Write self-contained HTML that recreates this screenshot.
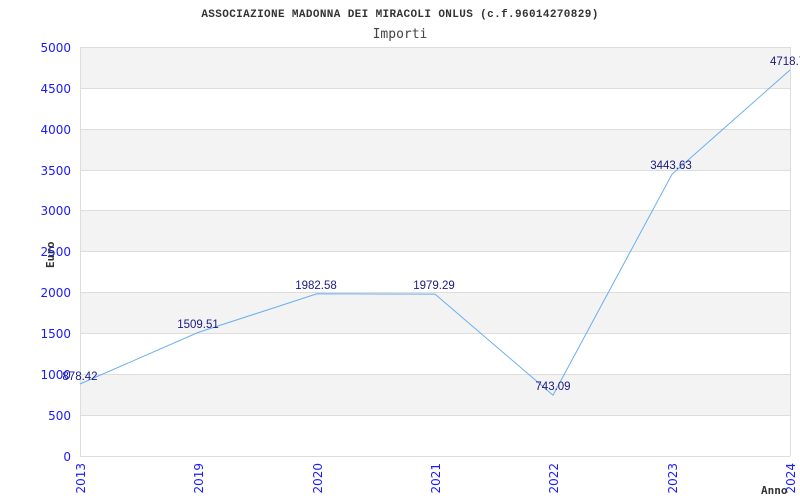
<!DOCTYPE html>
<html><head><meta charset="utf-8"><style>
html,body{margin:0;padding:0;background:#fff;}
svg{display:block}
</style></head><body>
<svg width="800" height="500" xmlns="http://www.w3.org/2000/svg">
<rect width="800" height="500" fill="#fff"/>
<text x="400" y="17" text-anchor="middle" font-family="Liberation Mono, DejaVu Sans Mono, monospace" font-weight="bold" font-size="11" letter-spacing="0.37" fill="#333">ASSOCIAZIONE MADONNA DEI MIRACOLI ONLUS (c.f.96014270829)</text>
<text x="400" y="38" text-anchor="middle" font-family="DejaVu Sans Mono, monospace" font-size="13" fill="#444">Importi</text>
<g fill="#f3f3f3">
<rect x="80" y="47" width="710" height="41"/>
<rect x="80" y="129" width="710" height="41"/>
<rect x="80" y="211" width="710" height="40"/>
<rect x="80" y="292" width="710" height="41"/>
<rect x="80" y="374" width="710" height="41"/>
</g>
<g stroke="#ddd" stroke-width="1">
<line x1="80" y1="47.5" x2="790" y2="47.5"/>
<line x1="80" y1="88.5" x2="790" y2="88.5"/>
<line x1="80" y1="129.5" x2="790" y2="129.5"/>
<line x1="80" y1="170.5" x2="790" y2="170.5"/>
<line x1="80" y1="210.5" x2="790" y2="210.5"/>
<line x1="80" y1="251.5" x2="790" y2="251.5"/>
<line x1="80" y1="292.5" x2="790" y2="292.5"/>
<line x1="80" y1="333.5" x2="790" y2="333.5"/>
<line x1="80" y1="374.5" x2="790" y2="374.5"/>
<line x1="80" y1="415.5" x2="790" y2="415.5"/>
<line x1="80" y1="456.5" x2="790" y2="456.5"/>
<line x1="80.5" y1="47" x2="80.5" y2="456"/>
<line x1="790.5" y1="47" x2="790.5" y2="456"/>
</g>
<g font-family="DejaVu Sans, sans-serif" font-size="12" fill="#1a1aff" text-anchor="end">
<text x="71" y="52">5000</text>
<text x="71" y="93">4500</text>
<text x="71" y="134">4000</text>
<text x="71" y="175">3500</text>
<text x="71" y="215">3000</text>
<text x="71" y="256">2500</text>
<text x="71" y="297">2000</text>
<text x="71" y="338">1500</text>
<text x="71" y="379">1000</text>
<text x="71" y="420">500</text>
<text x="71" y="461">0</text>
</g>
<g font-family="DejaVu Sans, sans-serif" font-size="12" fill="#1a1aff" text-anchor="end">
<text transform="translate(85,463) rotate(-90)">2013</text>
<text transform="translate(203,463) rotate(-90)">2019</text>
<text transform="translate(322,463) rotate(-90)">2020</text>
<text transform="translate(440,463) rotate(-90)">2021</text>
<text transform="translate(558,463) rotate(-90)">2022</text>
<text transform="translate(677,463) rotate(-90)">2023</text>
<text transform="translate(795,463) rotate(-90)">2024</text>
</g>
<text transform="translate(54,268) rotate(-90)" font-family="DejaVu Sans Mono, monospace" font-weight="bold" font-size="11" fill="#333">Euro</text>
<text x="761" y="494" font-family="DejaVu Sans Mono, monospace" font-weight="bold" font-size="11" fill="#333">Anno</text>
<polyline fill="none" stroke="#6aaef0" stroke-width="1" points="80,384 198,332.5 317,293.8 435,294.1 553,395.2 672,174.3 790,70"/>
<g font-family="Liberation Sans, Arial, sans-serif" font-size="11.5" fill="#1a1a80" text-anchor="middle">
<text x="80" y="380">878.42</text>
<text x="198" y="328">1509.51</text>
<text x="316" y="289">1982.58</text>
<text x="434" y="289">1979.29</text>
<text x="553" y="390">743.09</text>
<text x="671" y="169">3443.63</text>
<text x="770" y="65" text-anchor="start">4718.7</text>
</g>
</svg>
</body></html>
